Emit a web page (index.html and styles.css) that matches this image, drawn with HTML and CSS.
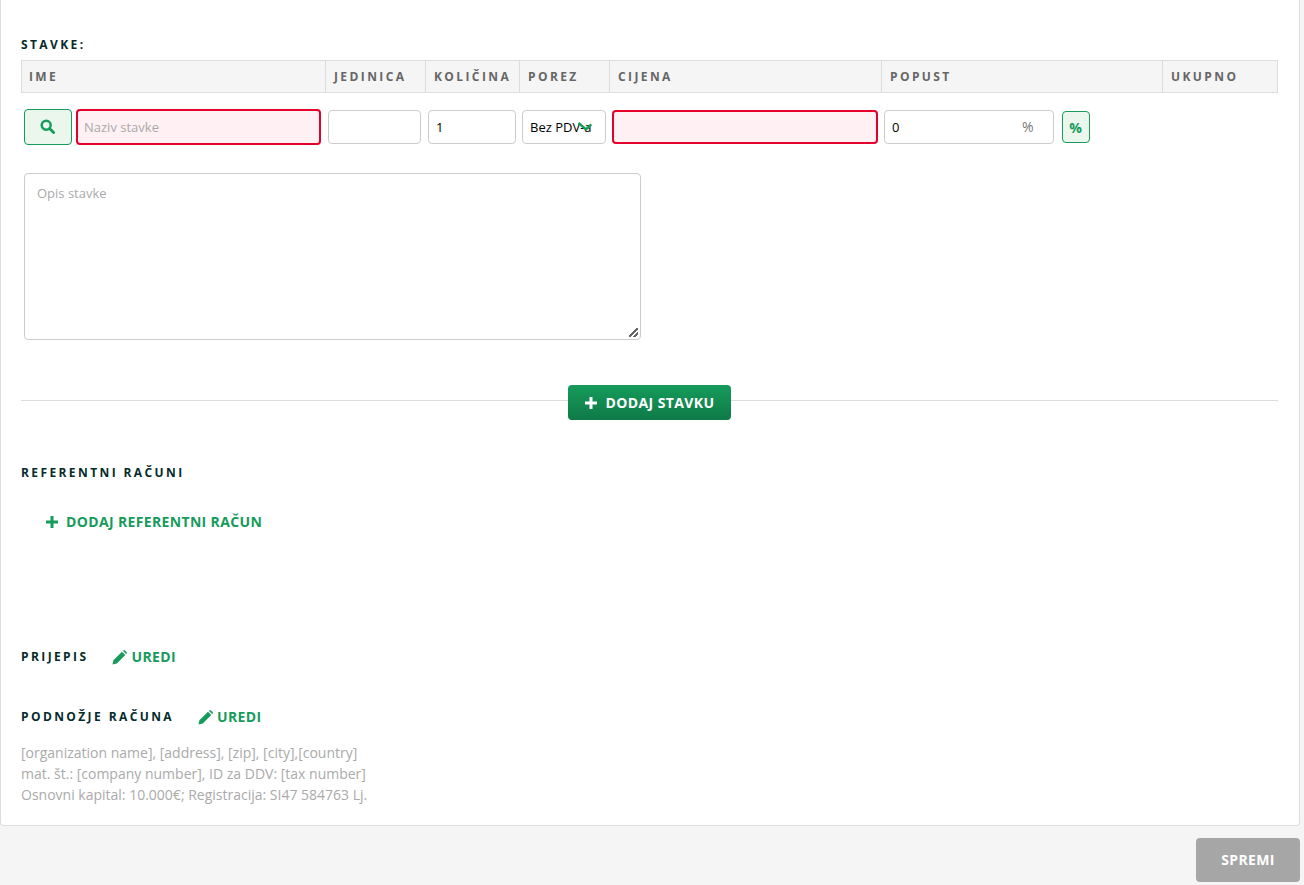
FILE: index.html
```html
<!DOCTYPE html>
<html lang="hr">
<head>
<meta charset="utf-8">
<title>Stavke</title>
<link rel="stylesheet" href="styles.css">
</head>
<body>
<main class="card">
  <h2 class="label label-items">STAVKE:</h2>
  <div class="thead">
    <div class="th th-first">IME</div>
    <div class="th">JEDINICA</div>
    <div class="th">KOLIČINA</div>
    <div class="th">POREZ</div>
    <div class="th">CIJENA</div>
    <div class="th">POPUST</div>
    <div class="th th-last">UKUPNO</div>
  </div>
  <div class="row">
    <button class="search-btn" type="button" aria-label="Traži">
      <svg class="ico-search" viewBox="0 0 16 16"><circle cx="6.600" cy="6.600" r="4.800" fill="none" stroke="currentColor" stroke-width="2.600"/><path d="M10.200 10.200l4.300 4.300" stroke="currentColor" stroke-width="3" stroke-linecap="round"/></svg>
    </button>
    <input class="field field-name invalid" type="text" placeholder="Naziv stavke">
    <input class="field field-unit" type="text">
    <input class="field field-qty" type="text" value="1">
    <div class="select-wrap">
      <select class="field field-tax"><option>Bez PDV-a</option></select>
      <svg class="chevron" viewBox="0 0 14 9"><path d="M0.500 1L8 7.300L13.300 2.500" fill="none" stroke="currentColor" stroke-width="2.400"/></svg>
    </div>
    <input class="field field-price invalid" type="text">
    <div class="discount-wrap">
      <input class="field field-discount" type="text" value="0">
      <span class="discount-unit">%</span>
    </div>
    <button class="percent-btn" type="button">%</button>
  </div>
  <textarea class="description" placeholder="Opis stavke"></textarea>
  <div class="divider-row">
    <button class="add-btn" type="button">
      <svg class="ico-plus" viewBox="0 0 14 14"><path d="M7 1v12M1 7h12" stroke="currentColor" stroke-width="3"/></svg>
      DODAJ STAVKU
    </button>
  </div>
  <h2 class="label label-ref">REFERENTNI RAČUNI</h2>
  <a class="link link-ref" href="#">
    <svg class="ico-plus-small" viewBox="0 0 14 14"><path d="M7 1v12M1 7h12" stroke="currentColor" stroke-width="3"/></svg>
    DODAJ REFERENTNI RAČUN
  </a>
  <div class="edit-row edit-transcript">
    <h2 class="label">PRIJEPIS</h2>
    <a class="link" href="#">
      <svg class="ico-pencil" viewBox="0 0 16 16"><path d="M0.500 15.500l1-4.600L10.600 1.800l3.600 3.600-9.100 9.100zM11.600 0.800l1-.5c.5-.2 1-.1 1.300.2l1.600 1.600c.3.3.4.8.2 1.300l-.5 1z" fill="currentColor"/></svg>
      UREDI
    </a>
  </div>
  <div class="edit-row edit-footer">
    <h2 class="label">PODNOŽJE RAČUNA</h2>
    <a class="link" href="#">
      <svg class="ico-pencil" viewBox="0 0 16 16"><path d="M0.500 15.500l1-4.600L10.600 1.800l3.600 3.600-9.100 9.100zM11.600 0.800l1-.5c.5-.2 1-.1 1.300.2l1.600 1.600c.3.3.4.8.2 1.300l-.5 1z" fill="currentColor"/></svg>
      UREDI
    </a>
  </div>
  <p class="footer-text">[organization name], [address], [zip], [city],[country]<br>mat. št.: [company number], ID za DDV: [tax number]<br>Osnovni kapital: 10.000€; Registracija: SI47 584763 Lj.</p>
</main>
<div class="actions">
  <button class="save-btn" type="button">SPREMI</button>
</div>
</body>
</html>
```
FILE: styles.css
```css
* { box-sizing: border-box; }
html, body { margin: 0; padding: 0; }
body {
  width: 1304px;
  height: 885px;
  overflow: hidden;
  background: #f5f5f5;
  font-family: "Open Sans", sans-serif;
  font-size: 14px;
  color: #222;
}
.card {
  width: 1300px;
  height: 826px;
  padding: 37px 21px 0 20px;
  background: #fff;
  border: 1px solid #ddd;
  border-top: 0;
  border-radius: 0 0 4px 4px;
}
.label {
  margin: 0;
  font-size: 12px;
  line-height: 16px;
  font-weight: 700;
  letter-spacing: 2.4px;
  color: #062b2b;
}
.label-items { margin-bottom: 7px; }
.thead {
  display: grid;
  grid-template-columns: 304px 100px 94px 90px 272px 281px 116px;
  width: 1257px;
  height: 33px;
  background: #f5f5f5;
  border: 1px solid #ddd;
}
.th {
  padding-left: 8px;
  font-size: 12px;
  line-height: 31px;
  font-weight: 700;
  letter-spacing: 2.4px;
  color: #666;
  border-right: 1px solid #ddd;
  white-space: nowrap;
}
.th-first { padding-left: 7px; }
.th-last { border-right: 0; padding-left: 8px; }
.row {
  display: flex;
  align-items: center;
  margin: 16px 0 0 3px;
  height: 36px;
}
.field {
  height: 34px;
  padding: 0 7px;
  background: #fff;
  border: 1px solid #ccc;
  border-radius: 4px;
  font-family: "Open Sans", sans-serif;
  font-size: 13px;
  color: #000;
  outline: 0;
}
.field::placeholder { color: #aaa; opacity: 1; }
.invalid { background: #fff0f3; border: 2px solid #e4002b; }
.search-btn {
  display: flex;
  align-items: center;
  justify-content: center;
  width: 48px;
  height: 36px;
  padding: 0 2px 1px 0;
  margin-right: 4px;
  background: #ebf7ec;
  border: 1px solid #169b5b;
  border-radius: 4px;
  color: #169b5b;
}
.ico-search { width: 15px; height: 15px; }
.field-name { width: 245px; height: 36px; padding: 0 6px; margin-right: 7px; }
.field-unit { width: 93px; margin-right: 7px; }
.field-qty { width: 88px; margin-right: 6px; }
.select-wrap { position: relative; width: 84px; height: 34px; margin-right: 6px; }
.field-tax { width: 84px; appearance: none; -webkit-appearance: none; }
.chevron {
  position: absolute;
  left: 56px;
  top: 12px;
  width: 14px;
  height: 9px;
  color: #169b5b;
}
.field-price { width: 266px; margin-right: 6px; }
.discount-wrap { position: relative; width: 170px; height: 34px; margin-right: 8px; }
.field-discount { width: 170px; }
.discount-unit {
  position: absolute;
  left: 138px;
  top: 7px;
  font-size: 14px;
  line-height: 19px;
  color: #777;
}
.percent-btn {
  width: 28px;
  height: 32px;
  padding: 0 1px 0 0;
  background: #ebf7ec;
  border: 1px solid #169b5b;
  border-radius: 4px;
  font-family: "Open Sans", sans-serif;
  font-size: 14px;
  font-weight: 700;
  color: #169b5b;
}
.description {
  display: block;
  width: 617px;
  height: 167px;
  margin: 28px 0 0 3px;
  padding: 10px 12px;
  border: 1px solid #ccc;
  border-radius: 4px;
  font-family: "Open Sans", sans-serif;
  font-size: 13px;
  line-height: 18px;
  outline: 0;
}
.description::placeholder { color: #aaa; opacity: 1; }
.description::-webkit-resizer {
  background: linear-gradient(135deg, transparent 42%, #666 42%, #666 56%, transparent 56%, transparent 72%, #666 72%, #666 86%, transparent 86%) no-repeat right 2px bottom 2px / 9px 9px;
}
.divider-row {
  position: relative;
  display: flex;
  justify-content: center;
  width: 1257px;
  margin-top: 45px;
  height: 35px;
}
.divider-row::before {
  content: "";
  position: absolute;
  left: 0;
  right: 0;
  top: 15px;
  height: 1px;
  background: #ddd;
}
.add-btn {
  position: relative;
  display: flex;
  align-items: center;
  justify-content: center;
  gap: 7px;
  width: 163px;
  height: 35px;
  padding: 0;
  background: linear-gradient(#169b5b, #0f7a47);
  border: 0;
  border-radius: 4px;
  font-family: "Open Sans", sans-serif;
  font-size: 14px;
  font-weight: 700;
  letter-spacing: .4px;
  color: #fff;
}
.ico-plus { width: 14px; height: 14px; }
.label-ref { margin-top: 45px; }
.link {
  display: inline-flex;
  align-items: center;
  font-size: 14px;
  line-height: 20px;
  font-weight: 700;
  letter-spacing: .35px;
  color: #169b5b;
  text-decoration: none;
}
.link-ref { margin: 31px 0 0 24px; gap: 7px; }
.ico-plus-small { width: 14px; height: 14px; }
.ico-pencil { width: 15px; height: 15px; margin-right: 4px; }
.edit-row { display: flex; align-items: center; gap: 24px; height: 20px; }
.edit-transcript { margin-top: 114px; }
.edit-footer { margin-top: 40px; }
.footer-text {
  margin: 15px 0 0;
  font-size: 14px;
  line-height: 21px;
  color: #aaa;
}
.actions {
  display: flex;
  justify-content: flex-end;
  width: 1300px;
  margin-top: 12px;
}
.save-btn {
  width: 104px;
  height: 44px;
  padding: 0 0 2px;
  background: #a6a6a6;
  border: 0;
  border-radius: 4px;
  font-family: "Open Sans", sans-serif;
  font-size: 14px;
  font-weight: 700;
  letter-spacing: .35px;
  color: #fff;
}
```
